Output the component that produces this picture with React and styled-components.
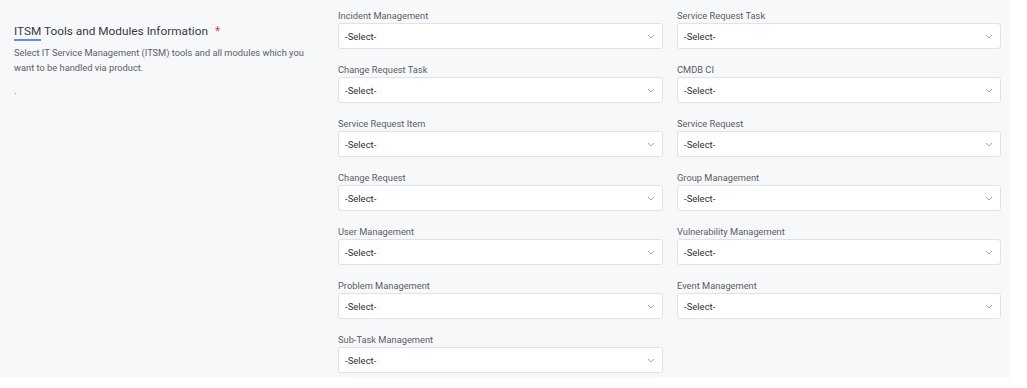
import React from 'react';
import styled, { createGlobalStyle } from 'styled-components';

const GlobalStyle = createGlobalStyle`
  body {
    margin: 0;
    background: #ffffff;
    font-family: Roboto, "Liberation Sans", Arial, sans-serif;
  }
`;

const fields = [
  'Incident Management',
  'Service Request Task',
  'Change Request Task',
  'CMDB CI',
  'Service Request Item',
  'Service Request',
  'Change Request',
  'Group Management',
  'User Management',
  'Vulnerability Management',
  'Problem Management',
  'Event Management',
  'Sub-Task Management',
];

const Panel = styled.section`
  width: 1010px;
  height: 378px;
  background: #f7f8fa;
  display: flex;
  box-sizing: border-box;
`;

const Intro = styled.div`
  width: 338px;
  box-sizing: border-box;
  padding: 22px 20px 0 14px;
`;

const Title = styled.h2`
  margin: 0;
  font-size: 11.8px;
  font-weight: 400;
  color: #373a40;
  line-height: 18px;
  display: flex;
  align-items: center;
`;

const Underlined = styled.span`
  position: relative;
  &::after {
    content: '';
    position: absolute;
    left: 0;
    right: 0;
    bottom: -3px;
    height: 2px;
    background: #5b8def;
  }
`;

const Required = styled.span`
  color: #e5484d;
  margin-left: 7px;
  font-size: 12px;
`;

const Description = styled.p`
  margin: 5px 0 0;
  font-size: 9.3px;
  line-height: 15px;
  color: #5c6066;
`;

const Dot = styled.p`
  margin: 8px 0 0;
  font-size: 9.3px;
  line-height: 15px;
  color: #5c6066;
`;

const Grid = styled.div`
  display: grid;
  grid-template-columns: 325px 324px;
  column-gap: 14px;
  row-gap: 14px;
  align-content: start;
  padding-top: 9px;
`;

const Field = styled.label`
  display: flex;
  flex-direction: column;
`;

const Label = styled.span`
  font-size: 9.3px;
  line-height: 14px;
  color: #5a5e64;
`;

const SelectBox = styled.div`
  height: 26px;
  box-sizing: border-box;
  background: #ffffff;
  border: 1px solid #dfe2e6;
  border-radius: 3px;
  display: flex;
  align-items: center;
  justify-content: space-between;
  padding: 0 7px 0 6px;
  font-size: 9.5px;
  color: #2f3237;
`;

const Chevron = () => (
  <svg width="8" height="5" viewBox="0 0 8 5" fill="none">
    <path d="M1 1l3 3 3-3" stroke="#a3a8ae" strokeWidth="1" />
  </svg>
);

export default function App() {
  return (
    <>
      <GlobalStyle />
      <Panel>
        <Intro>
          <Title>
            <span>
              <Underlined>ITSM</Underlined> Tools and Modules Information
            </span>
            <Required>*</Required>
          </Title>
          <Description>
            Select IT Service Management (ITSM) tools and all modules which you
            want to be handled via product.
          </Description>
          <Dot>.</Dot>
        </Intro>
        <Grid>
          {fields.map((name) => (
            <Field key={name}>
              <Label>{name}</Label>
              <SelectBox>
                <span>-Select-</span>
                <Chevron />
              </SelectBox>
            </Field>
          ))}
        </Grid>
      </Panel>
    </>
  );
}
